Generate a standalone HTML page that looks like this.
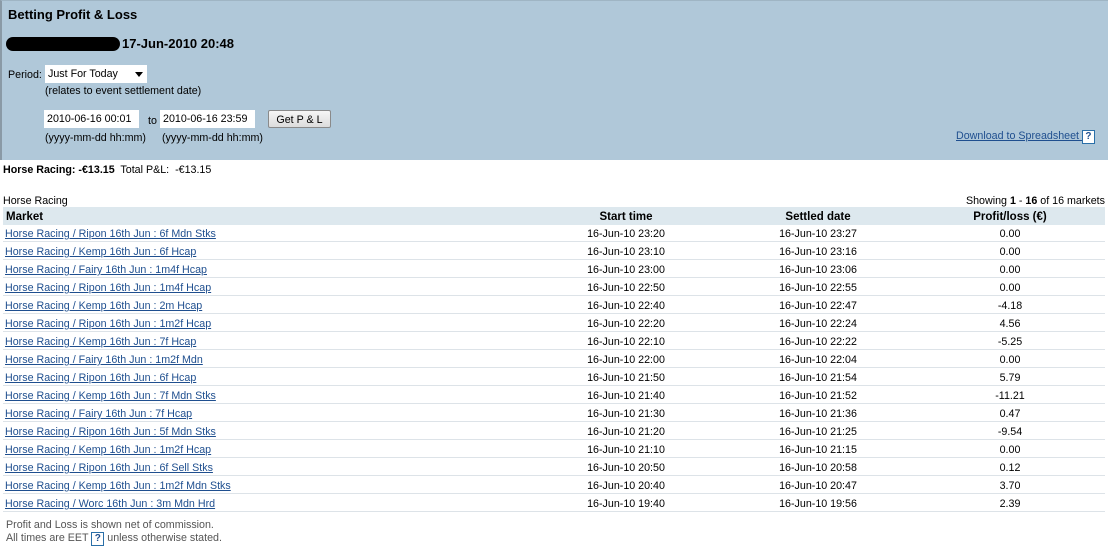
<!DOCTYPE html>
<html><head><meta charset="utf-8"><style>
body{margin:0;width:1108px;height:555px;background:#fff;font-family:"Liberation Sans","DejaVu Sans",sans-serif;font-size:10.7px;color:#000;position:relative;overflow:hidden}
.a{position:absolute;white-space:nowrap}
#panel{position:absolute;left:0;top:0;width:1108px;height:160px;background:#b0c8d9;border-left:2px solid #8a9aa6;box-sizing:border-box;border-top:1px solid #9fb5c4}
.inp{position:absolute;background:#fff;height:18px;line-height:19px;padding-left:3px;box-sizing:border-box}
a{color:#1f4f8f;text-decoration:underline}
.row{position:absolute;left:3px;width:1102px;height:18px;border-bottom:1px solid #dde3e8;box-sizing:border-box;line-height:20px}
.c{position:absolute;text-align:center}
.q{display:inline-block;border:1px solid #2a6fa8;color:#1f4f8f;font-weight:bold;width:11px;height:12px;line-height:12px;text-align:center;font-size:10px}
</style></head><body>
<div id="panel"></div>
<div class="a" style="left:8px;top:7px;font-size:13px;font-weight:bold">Betting Profit &amp; Loss</div>
<div class="a" style="left:6px;top:37px;width:114px;height:14px;background:#000;border-radius:7px"></div>
<div class="a" style="left:122px;top:36px;font-size:13px;font-weight:bold">17-Jun-2010 20:48</div>
<div class="a" style="left:8px;top:69px">Period:</div>
<div class="inp" style="left:45px;top:65px;width:102px">Just For Today<span style="position:absolute;left:90px;top:7px;border:4px solid transparent;border-top:5px solid #000;border-bottom:0"></span></div>
<div class="a" style="left:45px;top:85px">(relates to event settlement date)</div>
<div class="inp" style="left:44px;top:110px;width:95px">2010-06-16 00:01</div>
<div class="a" style="left:148px;top:115px">to</div>
<div class="inp" style="left:160px;top:110px;width:95px">2010-06-16 23:59</div>
<div class="a" style="left:268px;top:110px;width:63px;height:18px;border:1px solid #8a8a8a;border-radius:2px;background:linear-gradient(#f6f6f6,#dcdcdc);text-align:center;line-height:18px;box-sizing:border-box">Get P &amp; L</div>
<div class="a" style="left:45px;top:132px">(yyyy-mm-dd hh:mm)</div>
<div class="a" style="left:162px;top:132px">(yyyy-mm-dd hh:mm)</div>
<div class="a" style="left:956px;top:130px"><a>Download to Spreadsheet </a> <span class="q" style="background:#fff">?</span></div>
<div class="a" style="left:3px;top:164px"><b>Horse Racing: -€13.15</b>&nbsp; Total P&amp;L:&nbsp; -€13.15</div>
<div class="a" style="left:3px;top:195px">Horse Racing</div>
<div class="a" style="right:3px;top:195px">Showing <b>1</b> - <b>16</b> of 16 markets</div>
<div class="row" style="top:207px;background:#dde8ee;border:0;font-weight:bold;font-size:11.5px">
<span class="a" style="left:3px">Market</span><span class="c" style="left:570px;width:106px">Start time</span><span class="c" style="left:762px;width:106px">Settled date</span><span class="c" style="left:954px;width:106px">Profit/loss (€)</span></div>
<div id="rows"></div>
<script>
var d=[["Ripon 16th Jun : 6f Mdn Stks","23:20","23:27","0.00"],["Kemp 16th Jun : 6f Hcap","23:10","23:16","0.00"],["Fairy 16th Jun : 1m4f Hcap","23:00","23:06","0.00"],["Ripon 16th Jun : 1m4f Hcap","22:50","22:55","0.00"],["Kemp 16th Jun : 2m Hcap","22:40","22:47","-4.18"],["Ripon 16th Jun : 1m2f Hcap","22:20","22:24","4.56"],["Kemp 16th Jun : 7f Hcap","22:10","22:22","-5.25"],["Fairy 16th Jun : 1m2f Mdn","22:00","22:04","0.00"],["Ripon 16th Jun : 6f Hcap","21:50","21:54","5.79"],["Kemp 16th Jun : 7f Mdn Stks","21:40","21:52","-11.21"],["Fairy 16th Jun : 7f Hcap","21:30","21:36","0.47"],["Ripon 16th Jun : 5f Mdn Stks","21:20","21:25","-9.54"],["Kemp 16th Jun : 1m2f Hcap","21:10","21:15","0.00"],["Ripon 16th Jun : 6f Sell Stks","20:50","20:58","0.12"],["Kemp 16th Jun : 1m2f Mdn Stks","20:40","20:47","3.70"],["Worc 16th Jun : 3m Mdn Hrd","19:40","19:56","2.39"]];
var h="";d.forEach(function(r,i){h+='<div class="row" style="top:'+(224+i*18)+'px"><span class="a" style="left:2px"><a>Horse Racing / '+r[0]+'</a></span><span class="c" style="left:570px;width:106px">16-Jun-10 '+r[1]+'</span><span class="c" style="left:762px;width:106px">16-Jun-10 '+r[2]+'</span><span class="c" style="left:954px;width:106px">'+r[3]+'</span></div>';});
document.getElementById("rows").innerHTML=h;
</script>
<div class="a" style="left:6px;top:519px;color:#555">Profit and Loss is shown net of commission.</div>
<div class="a" style="left:6px;top:532px;color:#555">All times are EET <span class="q">?</span> unless otherwise stated.</div>
</body></html>
